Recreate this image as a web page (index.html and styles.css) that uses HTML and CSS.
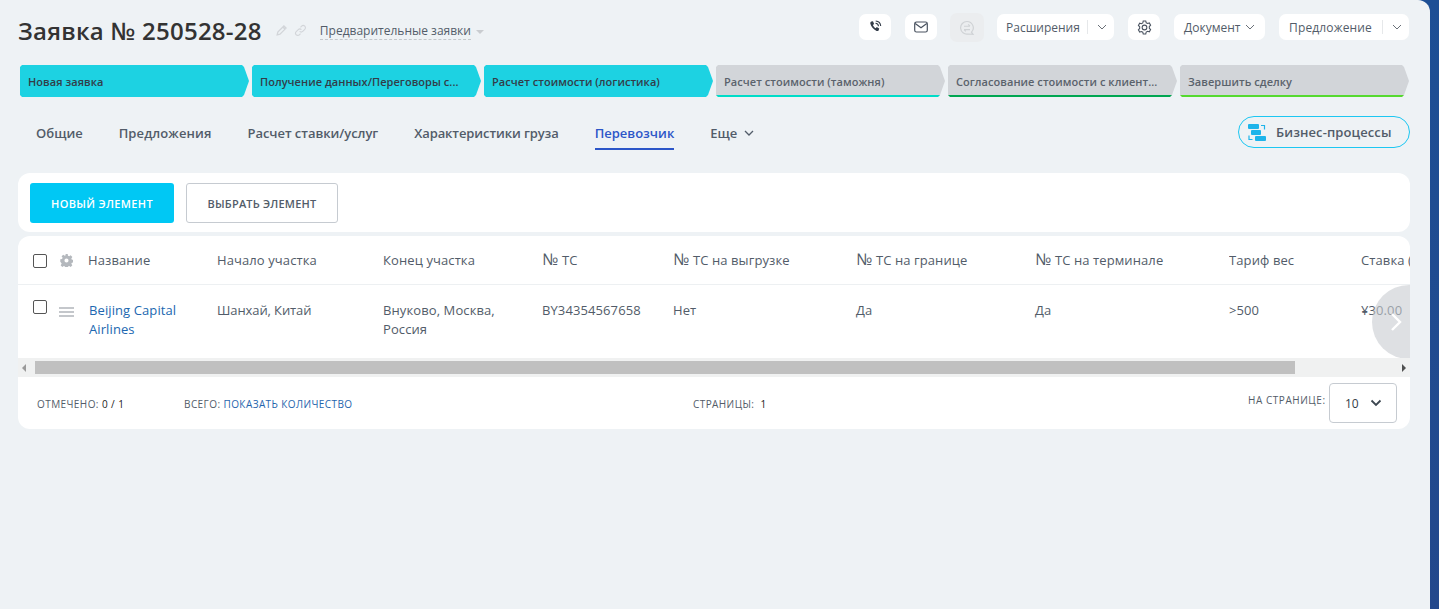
FILE: index.html
```html
<!DOCTYPE html>
<html lang="ru">
<head>
<meta charset="utf-8">
<title>Заявка № 250528-28</title>
<link rel="stylesheet" href="styles.css">
</head>
<body>
<div class="page">
  <main class="main">
    <header class="top">
      <div class="title-box">
        <h1 class="title">Заявка № 250528-28</h1>
        <svg class="tool tool-a" viewBox="0 0 12 12"><path d="M2 10l.6-2.600L8.200 1.800l2 2L4.600 9.400z M7.300 2.800l2 2" fill="none" stroke="#d2d5d9" stroke-width="1.200"/></svg>
        <svg class="tool" viewBox="0 0 14 14"><path d="M6 8a2.400 2.400 0 0 0 3.400 0l2.200-2.200A2.400 2.400 0 0 0 8.200 2.400L7 3.600M8 6a2.400 2.400 0 0 0-3.400 0L2.400 8.200a2.400 2.400 0 0 0 3.400 3.400L7 10.400" fill="none" stroke="#d2d5d9" stroke-width="1.200"/></svg>
        <span class="category">Предварительные заявки</span>
        <span class="caret"></span>
      </div>
      <div class="actions">
        <button class="btn icon-btn"><svg width="14" height="14" viewBox="0 0 14 14"><path d="M3.400 1.600L5 1.200l1.100 2.700-1.200 1c.5 1.300 1.500 2.500 2.800 3.300l1.100-1.100 2.400 1.400-.5 1.700c-.3.700-1.300 1.100-2.100.8C5.300 9.200 3 6.700 2.300 3.500c-.1-.8.4-1.600 1.100-1.900z" fill="#333c48"/><path d="M7.500 3.300a3.300 3.300 0 0 1 3 3M7.700 1a5.400 5.400 0 0 1 5 5" fill="none" stroke="#333c48" stroke-width="1.100"/></svg></button>
        <button class="btn icon-btn"><svg width="14" height="12" viewBox="0 0 14 12"><rect x=".7" y="1" width="12.600" height="10" rx="1.800" fill="none" stroke="#4a5360" stroke-width="1.200"/><path d="M1.200 2.500L7 6.800l5.800-4.300" fill="none" stroke="#4a5360" stroke-width="1.200"/></svg></button>
        <button class="btn icon-btn disabled"><svg width="16" height="16" viewBox="0 0 16 16"><path d="M8 1.500a6.300 6.300 0 1 0 1 12.500l5 .4-1.500-2.200A6.300 6.300 0 0 0 8 1.500z" fill="none" stroke="#cfd2d5" stroke-width="1.200"/><path d="M5 6.200h6M9.200 4.400L11 6.200M11 9.600H5M6.800 11.400L5 9.600" fill="none" stroke="#cfd2d5" stroke-width="1.100"/></svg></button>
        <button class="btn split ext">Расширения<span class="sep"></span><svg class="chev" viewBox="0 0 10 6"><path d="M1 1l4 4 4-4" fill="none" stroke="#6a7078" stroke-width="1"/></svg></button>
        <button class="btn icon-btn gear-btn"><svg width="15" height="15" viewBox="0 0 14 14"><path d="M5.800 1h2.400l.4 1.600 1.300.7 1.600-.5 1.200 2.100-1.200 1.200v1.600l1.200 1.200-1.200 2.100-1.600-.5-1.300.7L8.200 13H5.800l-.4-1.600-1.300-.7-1.600.5-1.200-2.100 1.200-1.200V6.300L1.300 5.100l1.200-2.100 1.600.5 1.300-.7z" fill="none" stroke="#4a5360" stroke-width="1"/><circle cx="7" cy="7" r="2.200" fill="none" stroke="#4a5360" stroke-width="1"/></svg></button>
        <button class="btn doc">Документ<svg class="chev" viewBox="0 0 10 6"><path d="M1 1l4 4 4-4" fill="none" stroke="#6a7078" stroke-width="1"/></svg></button>
        <button class="btn split offer">Предложение<span class="sep"></span><svg class="chev" viewBox="0 0 10 6"><path d="M1 1l4 4 4-4" fill="none" stroke="#6a7078" stroke-width="1"/></svg></button>
      </div>
    </header>

    <ol class="stages">
      <li class="stage on"><span>Новая заявка</span></li>
      <li class="stage on"><span>Получение данных/Переговоры с...</span></li>
      <li class="stage on"><span>Расчет стоимости (логистика)</span></li>
      <li class="stage off l1"><span>Расчет стоимости (таможня)</span></li>
      <li class="stage off l2"><span>Согласование стоимости с клиент...</span></li>
      <li class="stage off l3"><span>Завершить сделку</span></li>
    </ol>

    <nav class="tabs">
      <a class="tab">Общие</a>
      <a class="tab t2">Предложения</a>
      <a class="tab t3">Расчет ставки/услуг</a>
      <a class="tab t4">Характеристики груза</a>
      <a class="tab active">Перевозчик</a>
      <a class="tab more">Еще<svg class="more-chev" viewBox="0 0 10 6"><path d="M1 1l4 4 4-4" fill="none" stroke="#525c69" stroke-width="1.300"/></svg></a>
      <button class="bp">
        <svg width="18" height="17" viewBox="0 0 18 17"><rect x="0" y="0" width="11" height="5" rx="1" fill="#1eb4ea"/><rect x="7" y="12" width="11" height="5" rx="1" fill="#1eb4ea"/><rect x="3" y="6" width="10" height="5" rx="1" fill="#1eb4ea"/><path d="M13 1.500h3.500v4M4.500 15.500H1v-4" fill="none" stroke="#1eb4ea" stroke-width="1.200"/></svg>
        Бизнес-процессы
      </button>
    </nav>

    <section class="toolbar">
      <button class="primary">НОВЫЙ ЭЛЕМЕНТ</button>
      <button class="secondary">ВЫБРАТЬ ЭЛЕМЕНТ</button>
    </section>

    <section class="grid-card">
      <div class="table-wrap">
        <table class="grid">
          <colgroup>
            <col class="c1"><col class="c2"><col class="c3"><col class="c4"><col class="c5"><col class="c6"><col class="c7"><col class="c8"><col class="c9"><col class="c10"><col class="c11">
          </colgroup>
          <thead>
            <tr>
              <th><span class="check"></span></th>
              <th><svg class="gear" viewBox="0 0 14 14"><path fill-rule="evenodd" d="M5.700 0h2.600l.3 1.900 1.300.6 1.600-1.100 1.800 1.800-1.100 1.600.6 1.300 1.900.3v2.600l-1.900.3-.6 1.300 1.100 1.600-1.800 1.800-1.600-1.100-1.300.6-.3 1.900H5.700l-.3-1.900-1.300-.6-1.600 1.100-1.800-1.800 1.100-1.600-.6-1.300L.3 8.300V5.700l1.900-.3.6-1.300-1.100-1.600 1.800-1.800 1.600 1.100 1.300-.6zM7 4.800a2.200 2.200 0 1 0 0 4.400 2.200 2.200 0 0 0 0-4.400z" fill="#b4b8bd"/></svg></th>
              <th>Название</th><th>Начало участка</th><th>Конец участка</th><th><span class="no">№</span> ТС</th><th><span class="no">№</span> ТС на выгрузке</th><th><span class="no">№</span> ТС на границе</th><th><span class="no">№</span> ТС на терминале</th><th>Тариф вес</th><th>Ставка (</th>
            </tr>
          </thead>
          <tbody>
            <tr>
              <td><span class="check"></span></td>
              <td><span class="drag"><i></i><i></i><i></i></span></td>
              <td><a class="link">Beijing Capital Airlines</a></td>
              <td class="plain">Шанхай, Китай</td><td>Внуково, Москва, Россия</td><td>BY34354567658</td><td>Нет</td><td>Да</td><td>Да</td><td>&gt;500</td><td>¥30.00</td>
            </tr>
          </tbody>
        </table>
        <div class="next"><svg width="12" height="20" viewBox="0 0 12 20"><path d="M2 2l8 8-8 8" fill="none" stroke="#fff" stroke-width="2.400"/></svg></div>
      </div>
      <div class="scrollbar">
        <span class="arrow left"></span>
        <span class="thumb"></span>
        <span class="arrow right"></span>
      </div>
      <footer class="foot">
        <span class="f1">ОТМЕЧЕНО: <b>0 / 1</b></span>
        <span class="f2">ВСЕГО: <a>ПОКАЗАТЬ КОЛИЧЕСТВО</a></span>
        <span class="f3">СТРАНИЦЫ: &nbsp;<b>1</b></span>
        <span class="f4">НА СТРАНИЦЕ:</span>
        <span class="per"><span>10</span><svg width="12" height="8" viewBox="0 0 12 8"><path d="M1.500 1.500L6 6l4.500-4.500" fill="none" stroke="#3c4650" stroke-width="1.800"/></svg></span>
      </footer>
    </section>
  </main>
  <aside class="edge"></aside>
</div>
</body>
</html>
```
FILE: styles.css
```css
* { box-sizing: border-box; }
html, body { margin: 0; height: 100%; overflow: hidden; }
body { font-family: "Open Sans", "Noto Sans", sans-serif; color: #525c69; background: #eef2f5; }
button { font-family: inherit; cursor: pointer; }
.page { display: flex; width: 1439px; height: 609px; background: #1d4f95; }
.main { width: 1430px; flex: none; padding: 12px 20px 0 18px; border-top-right-radius: 12px; background: #eef2f5; }
.edge { flex: 1; background: linear-gradient(#1d4f95, #23488c); }

.top { display: flex; justify-content: space-between; height: 37px; }
.title-box { display: flex; align-items: center; height: 37px; }
.title { margin: 0; font-size: 24px; line-height: 36px; font-weight: 600; color: #333; letter-spacing: .27px; }
.tool { width: 13px; height: 13px; margin-left: 6px; flex: none; }
.tool-a { margin-left: 13px; }
.category { margin: 2px 0 0 13px; font-size: 12px; line-height: 16px; color: #525c69; border-bottom: 1px dashed #c4c8cc; }
.caret { margin: 2px 0 0 5px; border: 4px solid transparent; border-top-color: #c9ccd0; border-bottom: 0; }

.actions { display: flex; align-items: flex-start; margin: 1px 1px 0 0; }
.btn { display: flex; align-items: center; height: 26px; margin-top: 1px; padding: 0; border: 0; border-radius: 7px; background: #fff; font-size: 12px; color: #525c69; white-space: nowrap; }
.icon-btn { justify-content: center; width: 32px; margin-right: 14px; flex: none; }
.icon-btn.disabled { width: 34px; height: 29px; margin: 0 13px 0 -1px; background: #ebedef; }
.sep { flex: none; width: 1px; height: 14px; margin: 0 9px 0 auto; background: #e6e8ea; }
.chev { width: 10px; height: 6px; flex: none; }
.split { padding: 0 7px 0 9px; }
.ext { width: 117px; margin-right: 14px; }
.doc { width: 91px; margin-right: 14px; padding: 0 10px 0 10px; justify-content: space-between; }
.offer { width: 130px; padding-left: 10px; letter-spacing: .15px; }

.stages { display: flex; gap: 3px; margin: 16px 0 0 2px; padding: 0; list-style: none; }
.stage { position: relative; width: 229px; height: 32px; padding-left: 8px; font-size: 11px; line-height: 33px; font-weight: 600; white-space: nowrap; letter-spacing: .05px; clip-path: polygon(2px 0, calc(100% - 7px) 0, calc(100% - 5px) 2px, 100% 50%, calc(100% - 5px) calc(100% - 2px), calc(100% - 7px) 100%, 2px 100%, 0 calc(100% - 2px), 0 2px); }
.stage.on { background: #1dd2e2; color: #333c48; }
.stage.off { background: #d2d5d9; color: #5a626c; }
.stage.off::after { content: ""; position: absolute; left: 0; right: 5px; bottom: 0; height: 2px; }
.l1::after { background: #00dcc8; }
.l2::after { background: #00a651; }
.l3::after { background: #55d92f; }

.tabs { display: flex; align-items: flex-start; height: 57px; margin-top: 19px; }
.tab { height: 34px; margin: 0 18px; font-size: 13px; line-height: 34px; font-weight: 600; color: #525c69; white-space: nowrap; }
.t2 { letter-spacing: .1px; }
.t3 { letter-spacing: -.05px; }
.t4 { letter-spacing: -.1px; }
.tab.active { color: #2c56c8; border-bottom: 2px solid #2c56c8; }
.more { display: flex; align-items: center; }
.more-chev { width: 10px; height: 6px; margin-left: 7px; }
.bp { display: flex; align-items: center; gap: 10px; width: 172px; height: 32px; margin: 0 0 0 auto; padding: 0 0 0 9px; border: 1px solid #1cc7f2; border-radius: 16px; background: transparent; font-size: 13px; font-weight: 600; letter-spacing: .1px; color: #525c69; }

.toolbar { display: flex; gap: 12px; height: 59px; padding: 10px 12px; background: #fff; border-radius: 12px; }
.primary, .secondary { height: 40px; border-radius: 3px; font-size: 11px; font-weight: 600; }
.primary { width: 144px; border: 0; background: #00c8f4; color: #fff; letter-spacing: .35px; }
.secondary { width: 152px; border: 1px solid #c6cbd1; background: #fff; color: #525c69; letter-spacing: .2px; }

.grid-card { margin-top: 4px; height: 193px; background: #fff; border-radius: 12px; overflow: hidden; }
.table-wrap { position: relative; height: 122px; overflow: hidden; }
.grid { width: 1392px; table-layout: fixed; border-collapse: collapse; font-size: 13px; line-height: 19px; letter-spacing: .1px; color: #525c69; }
.c1 { width: 41px; } .c2 { width: 29px; } .c3 { width: 129px; } .c4 { width: 166px; } .c5 { width: 159px; } .c6 { width: 131px; } .c7 { width: 183px; } .c8 { width: 179px; } .c9 { width: 194px; } .c10 { width: 132px; } .c11 { width: 49px; }
.grid th { height: 48px; padding: 2px 0 0; font-weight: 400; text-align: left; white-space: nowrap; border-bottom: 1px solid #edf0f2; overflow: hidden; vertical-align: middle; }
.grid th:first-child, .grid td:first-child { padding-left: 15px; }
.grid td { padding: 16px 10px 0 0; vertical-align: top; }
.grid td:first-child { padding-top: 15px; padding-right: 0; }
.grid td:nth-child(2) { padding-top: 22px; }
.grid td:nth-child(3) { padding-left: 1px; }
.grid .plain { letter-spacing: -.1px; }
.no { font-size: 16px; line-height: 0; }
.check { display: block; width: 14px; height: 14px; border: 1px solid #555; border-radius: 2px; background: #fff; }
.gear { display: block; width: 13px; height: 13px; margin: 0 0 0 1px; }
.drag { display: block; width: 15px; }
.drag i { display: block; height: 2px; margin-bottom: 2px; background: #c4c7cb; }
.link { color: #2067b0; }
.next { position: absolute; right: -36px; top: 49px; display: flex; align-items: center; padding-left: 18px; width: 74px; height: 74px; border-radius: 50%; background: rgba(200, 203, 208, .6); }
.scrollbar { display: flex; align-items: center; height: 19px; background: #f0f1f1; }
.arrow { width: 0; height: 0; border: 4px solid transparent; }
.arrow.left { margin-left: 4px; border-right-color: #9a9a9a; border-left: 0; }
.arrow.right { margin-left: auto; margin-right: 4px; border-left-color: #505050; border-right: 0; }
.thumb { width: 1260px; height: 13px; margin: 0 0 1px 9px; background: #c0c0c0; }
.foot { display: flex; align-items: center; height: 52px; padding-top: 2px; font-size: 10px; letter-spacing: .42px; color: #525c69; }
.foot b { font-weight: 400; color: #222; }
.foot a { color: #1f65ad; }
.f1 { margin-left: 19px; width: 147px; }
.f2 { width: 509px; }
.f3 { width: 555px; }
.f4 { width: 81px; margin-top: -8px; white-space: nowrap; letter-spacing: .55px; }
.per { display: flex; align-items: center; justify-content: space-between; width: 68px; height: 40px; margin-top: -2px; padding: 0 14px 0 15px; border: 1px solid #c6cbd1; border-radius: 4px; font-size: 12px; letter-spacing: 0; color: #333c48; }
```
